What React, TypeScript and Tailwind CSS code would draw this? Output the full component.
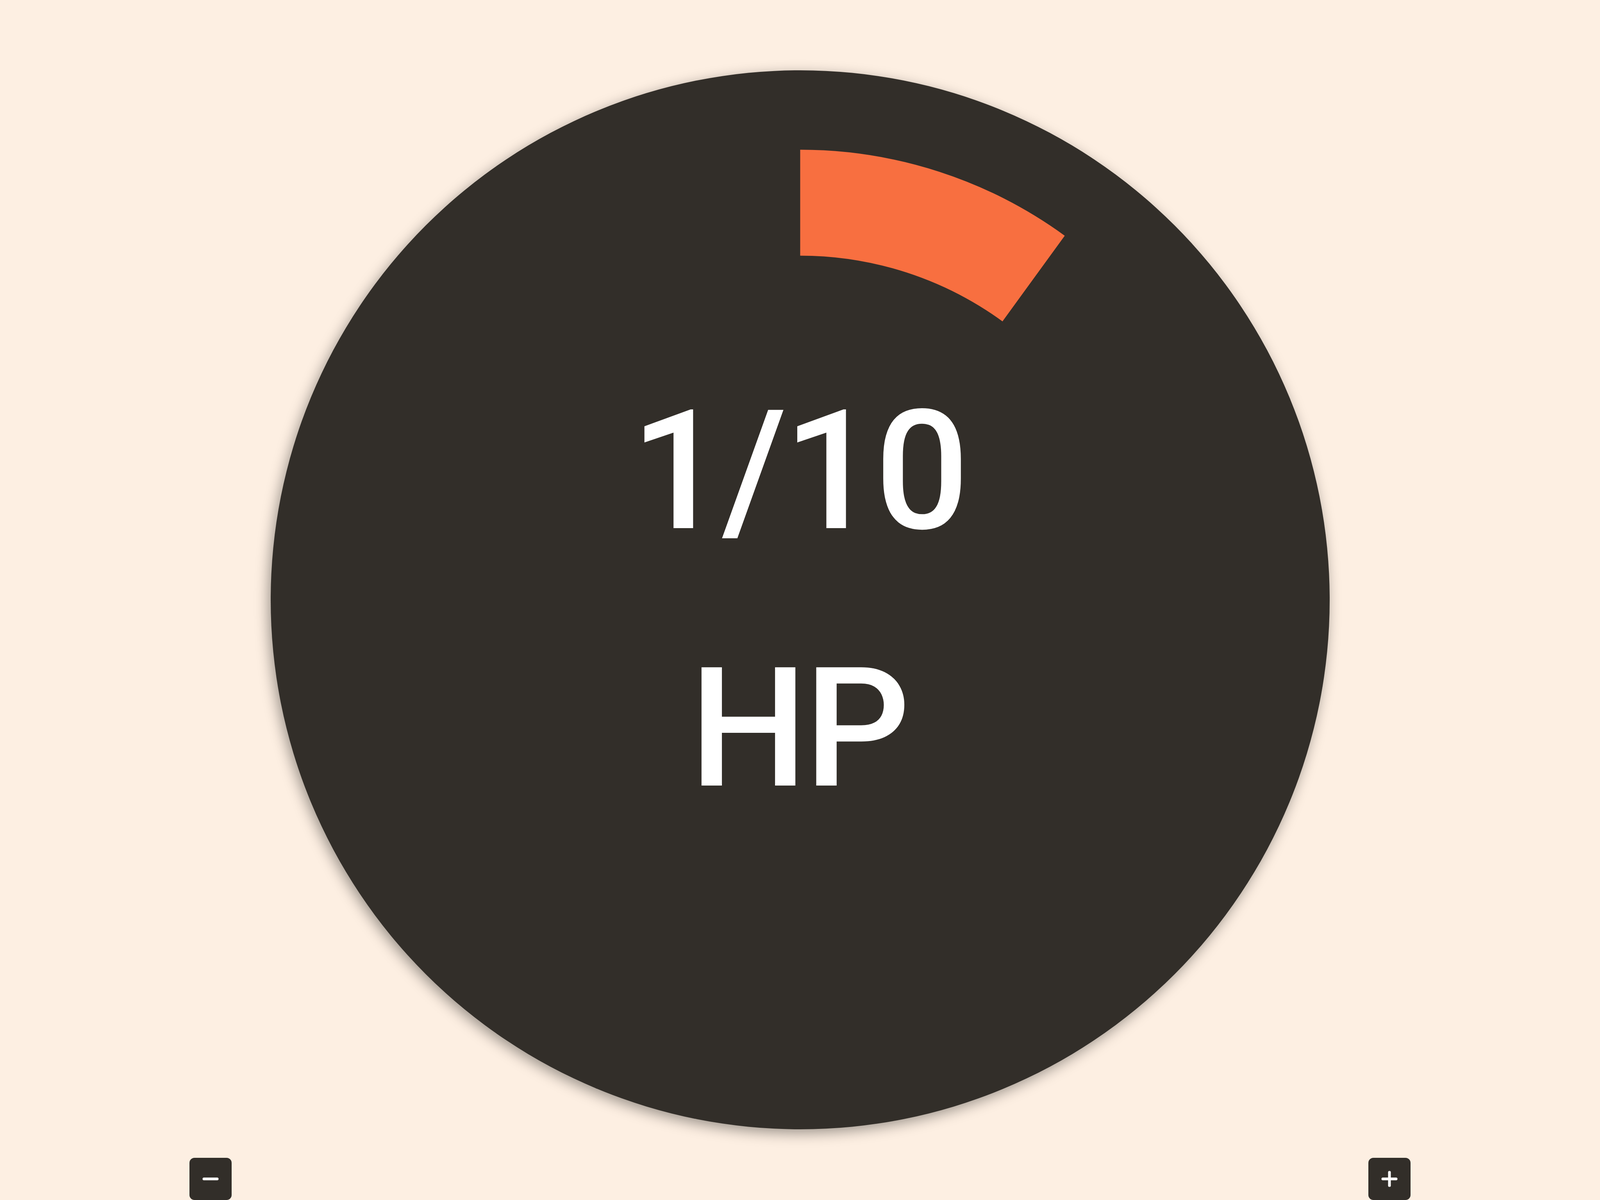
import React from "react";

function MinusIcon() {
  return (
    <svg width="42" height="42" viewBox="0 0 42 42" fill="none">
      <line x1="4" y1="21" x2="38" y2="21" stroke="white" strokeWidth="7" strokeLinecap="round" />
    </svg>
  );
}

function PlusIcon() {
  return (
    <svg width="42" height="42" viewBox="0 0 42 42" fill="none">
      <line x1="4" y1="21" x2="38" y2="21" stroke="white" strokeWidth="7" strokeLinecap="round" />
      <line x1="21" y1="4" x2="21" y2="38" stroke="white" strokeWidth="7" strokeLinecap="round" />
    </svg>
  );
}

export default function App() {
  const current = 1;
  const max = 10;
  const frac = current / max;
  const angle = frac * 2 * Math.PI;
  const r = 37.5;
  const ex = 50 + r * Math.sin(angle);
  const ey = 50 - r * Math.cos(angle);
  const largeArc = frac > 0.5 ? 1 : 0;

  return (
    <div className="w-full h-[3072px] overflow-hidden bg-[#fdefe2] flex flex-col items-center font-['Roboto',sans-serif]">
      <div className="relative mt-[180px] w-[2711px] h-[2711px] shrink-0 rounded-full bg-[#322e29] shadow-[-6px_10px_34px_rgba(0,0,0,0.38)] flex flex-col items-center justify-center text-white">
        <svg className="absolute inset-0 w-full h-full" viewBox="0 0 100 100" fill="none">
          <path
            d={`M50 12.5 A${r} ${r} 0 ${largeArc} 1 ${ex.toFixed(3)} ${ey.toFixed(3)}`}
            stroke="#f86f40"
            strokeWidth="10"
            strokeLinecap="butt"
          />
        </svg>
        <div className="relative text-[426px] leading-[659px] font-medium tracking-[-0.02em] pr-[0.02em]">
          {current}/{max}
        </div>
        <div className="relative text-[426px] leading-[659px] font-medium tracking-[-0.02em] pr-[0.02em]">HP</div>
      </div>
      <div className="mt-[73px] w-full px-[485px] flex justify-between shrink-0">
        <button className="w-[108px] h-[108px] rounded-[13px] bg-[#322e29] flex items-center justify-center">
          <MinusIcon />
        </button>
        <button className="w-[108px] h-[108px] rounded-[13px] bg-[#322e29] flex items-center justify-center">
          <PlusIcon />
        </button>
      </div>
    </div>
  );
}
